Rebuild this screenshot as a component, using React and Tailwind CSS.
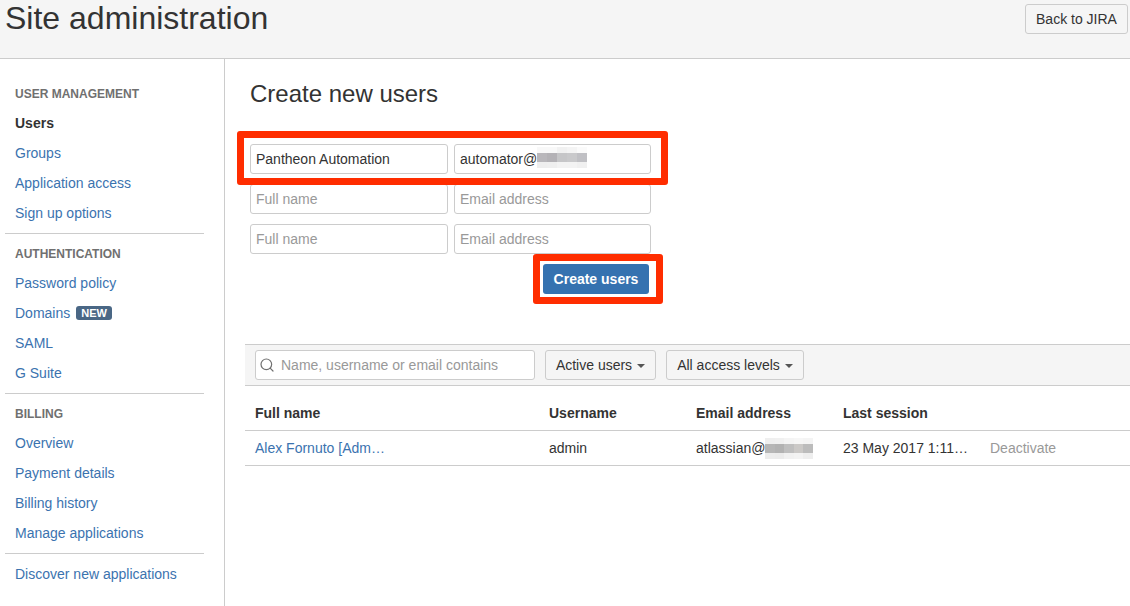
import React from 'react'
import { Search } from 'lucide-react'

const navGroups = [
  {
    title: 'USER MANAGEMENT',
    items: [{ label: 'Users', active: true }, { label: 'Groups' }, { label: 'Application access' }, { label: 'Sign up options' }],
  },
  {
    title: 'AUTHENTICATION',
    items: [{ label: 'Password policy' }, { label: 'Domains', badge: 'NEW' }, { label: 'SAML' }, { label: 'G Suite' }],
  },
  {
    title: 'BILLING',
    items: [{ label: 'Overview' }, { label: 'Payment details' }, { label: 'Billing history' }, { label: 'Manage applications' }],
  },
]

const inputClass =
  'h-[30px] min-w-0 rounded-[3px] border border-[#cccccc] bg-white px-[5px] text-sm text-[#333333] outline-none placeholder:text-[#999999]'

// pixelated patch hiding the email domain
const emailBlur = [
  ['#f8f8f8', '#f8f8f8', '#f1f1f1', '#f4f4f4', '#fafafa'],
  ['#b9b7bb', '#b4b2b6', '#c6c6c8', '#c9c9cb', '#c0c0c4'],
  ['#eeeeee', '#efefef', '#f3f3f3', '#f3f3f3', '#f0f0f0'],
]

const tableBlur = [
  ['#efefef', '#f0f0f0', '#f4f4f4', '#f6f6f6', '#f4f4f4'],
  ['#b6b6b6', '#b2b2b2', '#bfbfbf', '#cbc9c7', '#bcbcbc'],
  ['#ececec', '#ebebeb', '#f1f1f1', '#f3f3f3', '#eeeeee'],
]

function Blur({ rows, cellWidth, className = '' }) {
  return (
    <span className={'flex flex-col ' + className}>
      {rows.map((cells, r) => (
        <span key={r} className={r === 1 ? 'flex h-[9px]' : 'flex h-[6px]'}>
          {cells.map((c, i) => (
            <span key={i} className="h-full" style={{ background: c, width: cellWidth }} />
          ))}
        </span>
      ))}
    </span>
  )
}

function Caret() {
  return <span className="ml-[5px] inline-block border-x-[4px] border-t-[4px] border-x-transparent border-t-[#555555] align-[2px]" />
}

function Sidebar() {
  return (
    <aside className="w-[225px] shrink-0 border-r border-[#cccccc] pt-[20px] pl-[5px]">
      {navGroups.map((group) => (
        <div key={group.title} className="mb-[5px] w-[199px] border-b border-[#cccccc] pb-[5px]">
          <h3 className="h-[29px] pl-[10px] text-xs leading-[30px] font-bold text-[#707070]">{group.title}</h3>
          {group.items.map((item) => (
            <div key={item.label} className="flex h-[30px] items-center pl-[10px] text-sm">
              {item.active ? (
                <span className="font-bold text-[#333333]">{item.label}</span>
              ) : (
                <a className="text-[#3b73af]">{item.label}</a>
              )}
              {item.badge && (
                <span className="ml-[6px] rounded-[3px] bg-[#4a6785] px-[5px] text-[11px] leading-[14px] font-bold text-white">
                  {item.badge}
                </span>
              )}
            </div>
          ))}
        </div>
      ))}
      <div className="flex h-[30px] items-center pl-[10px] text-sm text-[#3b73af]">Discover new applications</div>
    </aside>
  )
}

function CreateForm() {
  return (
    <div className="relative mt-[35px] ml-[5px] w-[401px]">
      <div className="grid grid-cols-[198px_197px] gap-x-[6px] gap-y-[10px]">
        <input className={inputClass} readOnly value="Pantheon Automation" />
        <div className={inputClass + ' flex items-center'}>
          automator@
          <Blur rows={emailBlur} cellWidth={10} className="-mt-[3px]" />
        </div>
        <input className={inputClass} readOnly placeholder="Full name" />
        <input className={inputClass} readOnly placeholder="Email address" />
        <input className={inputClass} readOnly placeholder="Full name" />
        <input className={inputClass} readOnly placeholder="Email address" />
      </div>
      <div className="mt-[10px] flex justify-end pr-[2px]">
        <button className="h-[30px] w-[106px] rounded-[3px] bg-[#3572b0] text-sm font-bold text-white">Create users</button>
      </div>
      {/* red annotation frames */}
      <div className="absolute top-[-13px] left-[-13px] h-[54px] w-[431px] rounded-[3px] border-[7px] border-[#ff2d00]" />
      <div className="absolute top-[110px] left-[283px] h-[50px] w-[130px] rounded-[3px] border-[7px] border-[#ff2d00]" />
    </div>
  )
}

function UsersTable() {
  return (
    <div className="mt-[50px]">
      <div className="flex h-[42px] items-center gap-[10px] border-y border-[#cccccc] bg-[#f5f5f5] pl-[10px]">
        <div className="flex h-[30px] w-[280px] items-center rounded-[3px] border border-[#cccccc] bg-white pl-[3px] text-sm text-[#999999]">
          <Search size={16} strokeWidth={1.8} className="mr-[6px] text-[#707070]" />
          Name, username or email contains
        </div>
        <button className="h-[30px] w-[111px] rounded-[3px] border border-[#cccccc] bg-[#f5f5f5] text-sm text-[#333333]">
          Active users
          <Caret />
        </button>
        <button className="h-[30px] w-[138px] rounded-[3px] border border-[#cccccc] bg-[#f5f5f5] text-sm text-[#333333]">
          All access levels
          <Caret />
        </button>
      </div>
      <div className="grid h-[45px] grid-cols-[294px_147px_147px_147px_1fr] items-center border-b border-[#cccccc] pt-[9px] pl-[10px] text-sm font-bold text-[#333333]">
        <span>Full name</span>
        <span>Username</span>
        <span>Email address</span>
        <span>Last session</span>
      </div>
      <div className="grid h-[35px] grid-cols-[294px_147px_147px_147px_1fr] items-center border-b border-[#cccccc] pl-[10px] text-sm text-[#333333]">
        <a className="text-[#3b73af]">Alex Fornuto [Adm…</a>
        <span>admin</span>
        <span className="flex items-center whitespace-nowrap">
          atlassian@
          <Blur rows={tableBlur} cellWidth={9.5} />
        </span>
        <span>23 May 2017 1:11…</span>
        <a className="text-[#999999]">Deactivate</a>
      </div>
    </div>
  )
}

export default function App() {
  return (
    <div className="flex h-[606px] w-[1130px] flex-col overflow-hidden bg-white font-['Liberation_Sans',Arial,sans-serif] text-[#333333]">
      <header className="flex h-[59px] shrink-0 items-start justify-between border-b border-[#cccccc] bg-[#f5f5f5] pr-[2px] pl-[5px]">
        <h1 className="text-[32px] leading-[36px] font-normal">Site administration</h1>
        <button className="mt-[4px] h-[30px] w-[103px] rounded-[3px] border border-[#cccccc] bg-[#f5f5f5] text-sm text-[#333333]">
          Back to JIRA
        </button>
      </header>
      <div className="flex min-h-0 flex-1">
        <Sidebar />
        <main className="min-w-0 flex-1 pl-[20px]">
          <h2 className="mt-[20px] ml-[5px] text-2xl leading-[30px] font-normal">Create new users</h2>
          <CreateForm />
          <UsersTable />
        </main>
      </div>
    </div>
  )
}
